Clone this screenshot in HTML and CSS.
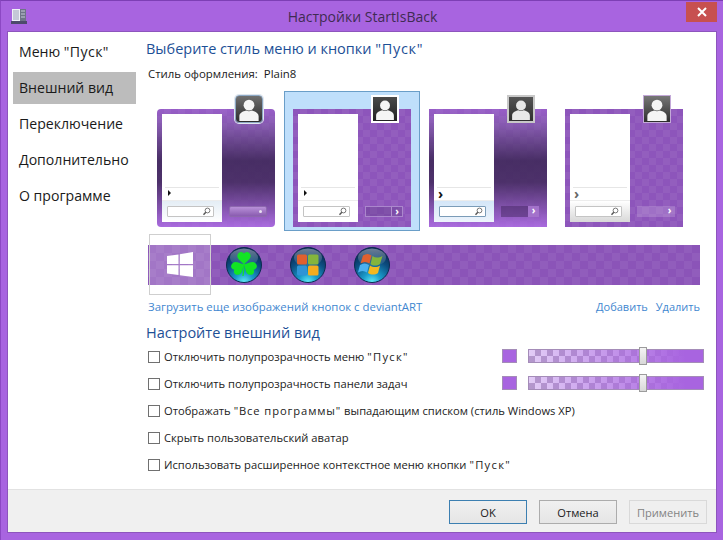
FILE: index.html
```html
<!DOCTYPE html>
<html lang="ru">
<head>
    <meta charset="UTF-8">
    <title>Настройки StartIsBack</title>
    <link rel="stylesheet" href="styles.css">
</head>
<body>

    <svg class="defs" width="0" height="0">
        <defs>
            <symbol id="person" viewBox="0 0 27 27">
                <circle cx="13.5" cy="9.5" r="5.6" fill="currentColor"/>
                <path d="M3.5 26V21c0-3.5 3.5-5 7-6 2 1 4 1 6 0 3.500 1 7 2.500 7 6v5z" fill="currentColor"/>
            </symbol>
            <symbol id="lens" viewBox="0 0 9 9">
                <circle cx="5.500" cy="3.500" r="2.400" fill="none" stroke="#777" stroke-width="1"/>
                <path d="M3.800 5.200L1.500 7.800" stroke="#555" stroke-width="1.400"/>
            </symbol>
            <radialGradient id="orbBody" cx="50%" cy="100%" r="90%">
                <stop offset="0" stop-color="#62eef8"/>
                <stop offset="0.3" stop-color="#1a9ccc"/>
                <stop offset="0.7" stop-color="#0c4d80"/>
                <stop offset="1" stop-color="#0a2c55"/>
            </radialGradient>
            <linearGradient id="orbGloss" x1="0" y1="0" x2="0" y2="1">
                <stop offset="0" stop-color="#fff" stop-opacity="0.4"/>
                <stop offset="1" stop-color="#fff" stop-opacity="0.03"/>
            </linearGradient>
        </defs>
    </svg>

    <header class="titlebar">
        <svg class="app-icon" width="17" height="17" viewBox="0 0 17 17">
            <rect x="0" y="13" width="16" height="3" fill="#4d4a6b"/>
            <rect x="1" y="1" width="8" height="12" fill="#eef0f6"/>
            <rect x="9" y="1" width="6" height="12" fill="#6e7488"/>
            <path d="M2 3h6M2 5h6M2 7h6M2 9h6M2 11h6" stroke="#9aa0b8" stroke-width="1"/>
            <path d="M10 3h4M10 6h4M10 9h4" stroke="#c4c9d8" stroke-width="1"/>
        </svg>
        <div class="title">Настройки StartIsBack</div>
        <button class="close-btn">
            <svg width="10" height="10" viewBox="0 0 10 10">
                <path d="M1 1l8 8M9 1l-8 8" stroke="#fff" stroke-width="2"/>
            </svg>
        </button>
    </header>

    <div class="client">
        <div class="main">
            <nav class="sidebar">
                <div class="nav-item">Меню <span class="quoted">"Пуск"</span></div>
                <div class="nav-item active">Внешний вид</div>
                <div class="nav-item">Переключение</div>
                <div class="nav-item">Дополнительно</div>
                <div class="nav-item">О программе</div>
            </nav>

            <section class="content">
                <h2 class="heading">Выберите стиль меню и кнопки <span class="quoted">"Пуск"</span></h2>
                <div class="style-name"><span>Стиль оформления:</span><span>Plain8</span></div>

                <div class="thumbs">
                    <div class="thumb">
                        <div class="preview glass rounded">
                            <div class="avatar avatar-glass"><svg class="person"><use href="#person"/></svg></div>
                            <div class="menu">
                                <div class="menu-list"><span class="arrow solid"></span></div>
                                <div class="menu-search tint-blue"><div class="search"><svg width="9" height="9"><use href="#lens"/></svg></div></div>
                            </div>
                            <div class="side"><div class="power power-glass"><i></i></div></div>
                        </div>
                    </div>
                    <div class="thumb selected">
                        <div class="preview flat">
                            <div class="avatar avatar-white"><svg class="person"><use href="#person"/></svg></div>
                            <div class="menu">
                                <div class="menu-list"><span class="arrow solid"></span></div>
                                <div class="menu-search"><div class="search"><svg width="9" height="9"><use href="#lens"/></svg></div></div>
                            </div>
                            <div class="side"><div class="power power-outline"><span class="seg">&rsaquo;</span></div></div>
                        </div>
                    </div>
                    <div class="thumb">
                        <div class="preview glass">
                            <div class="avatar avatar-gray"><svg class="person"><use href="#person"/></svg></div>
                            <div class="menu">
                                <div class="menu-list"><span class="chevron">&rsaquo;</span></div>
                                <div class="menu-search tint-strong"><div class="search search-blue"><svg width="9" height="9"><use href="#lens"/></svg></div></div>
                            </div>
                            <div class="side"><div class="power power-dark"><span class="seg seg-light">&rsaquo;</span></div></div>
                        </div>
                    </div>
                    <div class="thumb">
                        <div class="preview flat">
                            <div class="avatar avatar-soft"><svg class="person"><use href="#person"/></svg></div>
                            <div class="menu">
                                <div class="menu-list"><span class="chevron light">&rsaquo;</span></div>
                                <div class="menu-search tint-gray"><div class="search"><svg width="9" height="9"><use href="#lens"/></svg></div></div>
                            </div>
                            <div class="side"><div class="power power-light"><span class="seg seg-plain">&rsaquo;</span></div></div>
                        </div>
                    </div>
                </div>

                <div class="orbs">
                    <div class="orb-hover"></div>
                    <div class="orb-cell first">
                        <svg width="26" height="26" viewBox="0 0 26 26">
                            <path d="M0 4L11.500 2.400V12H0zM12.800 2.200L26 0V12H12.800zM0 13.300H11.500V23L0 21.500zM12.800 13.300H26V25L12.800 23.200z" fill="#fff"/>
                        </svg>
                    </div>
                    <div class="orb-cell">
                        <svg width="36" height="36" viewBox="0 0 36 36">
                            <circle cx="18" cy="18" r="17.500" fill="url(#orbBody)" stroke="#0c2c50"/>
                            <ellipse cx="18" cy="10.500" rx="14" ry="9" fill="url(#orbGloss)"/>
                            <g fill="#12e424">
                                <path d="M18 17.500C15 14 10.500 12 11.500 8 12.500 4.500 16 4 18 6.500 20 4 23.500 4.500 24.500 8 25.500 12 21 14 18 17.500z"/>
                                <path transform="rotate(-118 18 17.500)" d="M18 17.500C15 14 10.500 12 11.500 8 12.500 4.500 16 4 18 6.500 20 4 23.500 4.500 24.500 8 25.500 12 21 14 18 17.500z"/>
                                <path transform="rotate(118 18 17.500)" d="M18 17.500C15 14 10.500 12 11.500 8 12.500 4.500 16 4 18 6.500 20 4 23.500 4.500 24.500 8 25.500 12 21 14 18 17.500z"/>
                            </g>
                            <path d="M18 17c0 4-.3 7-1 12" stroke="#12e424" stroke-width="1.300" fill="none"/>
                        </svg>
                    </div>
                    <div class="orb-cell">
                        <svg width="36" height="36" viewBox="0 0 36 36">
                            <circle cx="18" cy="18" r="17.500" fill="url(#orbBody)" stroke="#0c2c50"/>
                            <ellipse cx="18" cy="10.500" rx="14" ry="9" fill="url(#orbGloss)"/>
                            <rect x="7" y="7.500" width="10" height="10" rx="1.500" fill="#e0602e"/>
                            <rect x="18" y="7.500" width="10.500" height="10" rx="1.500" fill="#84b53c"/>
                            <rect x="7" y="18.500" width="10" height="10" rx="1.500" fill="#2f94d6"/>
                            <rect x="18" y="18.500" width="10.500" height="10" rx="1.500" fill="#f4ac1e"/>
                        </svg>
                    </div>
                    <div class="orb-cell">
                        <svg width="36" height="36" viewBox="0 0 36 36">
                            <circle cx="18" cy="18" r="17.500" fill="url(#orbBody)" stroke="#0c2c50"/>
                            <ellipse cx="18" cy="10.500" rx="14" ry="9" fill="url(#orbGloss)"/>
                            <path d="M9 8.500c3-2 6-2 8.500 0l-2 8c-3-2-6-2-9 0z" fill="#e0602e"/>
                            <path d="M18.500 9c3 2 6 2 10 0l-2.500 8c-3 2-7 2-9.500 0z" fill="#84b53c"/>
                            <path d="M6 18c3-2 6-2 9 0l-2 7.500c-3-2-6-2-9 0z" fill="#4ab0f0"/>
                            <path d="M16 18.500c3 2 7 2 10 0l-2 7.500c-3 2-7 2-10 0z" fill="#f4b820"/>
                        </svg>
                    </div>
                </div>

                <div class="links">
                    <a class="link">Загрузить еще изображений кнопок с deviantART</a>
                    <div class="links-right">
                        <a class="link">Добавить</a>
                        <a class="link">Удалить</a>
                    </div>
                </div>

                <h2 class="heading heading-second">Настройте внешний вид</h2>

                <div class="options">
                    <div class="option">
                        <span class="check"></span><span class="label">Отключить полупрозрачность меню <span class="quoted">"Пуск"</span></span>
                        <div class="opacity">
                            <span class="swatch"></span>
                            <div class="slider"><span class="slider-thumb"></span></div>
                        </div>
                    </div>
                    <div class="option">
                        <span class="check"></span><span class="label">Отключить полупрозрачность панели задач</span>
                        <div class="opacity">
                            <span class="swatch"></span>
                            <div class="slider"><span class="slider-thumb"></span></div>
                        </div>
                    </div>
                    <div class="option">
                        <span class="check"></span><span class="label">Отображать <span class="quoted long">"Все программы"</span> выпадающим списком (стиль Windows XP)</span>
                    </div>
                    <div class="option">
                        <span class="check"></span><span class="label">Скрыть пользовательский аватар</span>
                    </div>
                    <div class="option">
                        <span class="check"></span><span class="label">Использовать расширенное контекстное меню кнопки <span class="quoted">"Пуск"</span></span>
                    </div>
                </div>
            </section>
        </div>

        <footer class="footer">
            <button class="btn btn-default">OK</button>
            <button class="btn">Отмена</button>
            <button class="btn btn-disabled">Применить</button>
        </footer>
    </div>

</body>
</html>
```

FILE: styles.css
```css
/* General styling */
html, body {
    height: 100%;
}

body {
    margin: 0;
    width: 723px;
    height: 540px;
    box-sizing: border-box;
    overflow: hidden;
    display: flex;
    flex-direction: column;
    padding: 0 7px 8px 7px;
    background: #a864e0;
    border-top: 1px solid #7d3fb5;
    border-left: 1px solid #8c48c4;
    font-family: "Open Sans", "Noto Sans", sans-serif;
    color: #1a1a1a;
}

.defs {
    position: absolute;
}

/* Title bar */
.titlebar {
    height: 31px;
    flex: none;
    display: flex;
    align-items: flex-start;
}

.app-icon {
    margin: 7px 0 0 3px;
}

.title {
    flex: 1;
    margin-top: 6px;
    padding-left: 11px;
    text-align: center;
    font-size: 14px;
    line-height: 20px;
    color: #3f2b52;
}

.close-btn {
    width: 31px;
    height: 20px;
    margin: 1px -1px 0 0;
    padding: 0;
    border: none;
    background: #c75050;
    display: flex;
    align-items: center;
    justify-content: center;
}

/* Client area */
.client {
    flex: 1;
    display: flex;
    flex-direction: column;
    background: #fff;
    outline: 1px solid #8d55bd;
}

.main {
    flex: 1;
    display: flex;
}

.sidebar {
    width: 128px;
    padding: 4px 0 0 5px;
    box-sizing: border-box;
    flex: none;
}

.nav-item {
    width: 123px;
    height: 32px;
    margin-bottom: 4px;
    padding-left: 6px;
    box-sizing: border-box;
    font-size: 14.100px;
    line-height: 32px;
    color: #1a1a1a;
}

.nav-item .quoted {
    letter-spacing: 0.4px;
}

.nav-item.active {
    background: #bcbcbc;
}

.content {
    flex: 1;
    padding: 7px 0 0 10px;
    min-width: 0;
}

.heading {
    margin: 0;
    font-size: 14.500px;
    font-weight: 400;
    line-height: 20px;
    color: #1d4f96;
}

.heading .quoted {
    letter-spacing: 0.7px;
}

.style-name {
    display: flex;
    gap: 6px;
    margin: 7px 0 0 2px;
    font-size: 11.400px;
    line-height: 16px;
    color: #1a1a1a;
}

/* Style thumbnails */
.thumbs {
    display: flex;
    margin: 9px 0 0 2px;
}

.thumb {
    width: 136px;
    height: 140px;
    box-sizing: border-box;
    padding: 18px 9px 4px;
}

.thumb.selected {
    background: #bfdffb;
    border: 1px solid #6a9ec8;
    padding: 17px 8px 3px;
}

.preview {
    width: 118px;
    height: 118px;
    box-sizing: border-box;
    padding: 5px;
    position: relative;
    display: flex;
    background-color: #8d55bb;
    background-image: repeating-conic-gradient(rgba(255, 255, 255, 0.05) 0 25%, transparent 0 50%);
    background-size: 14px 14px;
}

.preview.glass {
    background-color: #9a62c8;
    background-image:
        linear-gradient(180deg, rgba(150, 90, 200, 0.6) 0, rgba(125, 85, 165, 0.75) 14%, rgba(66, 42, 94, 0.94) 44%, rgba(70, 44, 98, 0.92) 62%, rgba(172, 108, 226, 0.85) 100%),
        repeating-conic-gradient(rgba(255, 255, 255, 0.1) 0 25%, transparent 0 50%);
    background-size: auto, 14px 14px;
}

.preview.rounded {
    border-radius: 4px;
}

.avatar {
    position: absolute;
    right: 12px;
    top: -14px;
    width: 28px;
    height: 28px;
    box-sizing: border-box;
    background: linear-gradient(180deg, #707070, #2c2c2c);
    color: #f5f5f5;
}

.person {
    display: block;
    width: 100%;
    height: 100%;
}

.avatar-glass {
    border: 1px solid #8da8c4;
    border-radius: 4px;
    box-shadow: 0 0 0 1px #dfe6ee;
}

.avatar-white {
    background: linear-gradient(180deg, #4a4a4a, #222);
    border: 2px solid #fff;
}

.avatar-gray {
    background: linear-gradient(180deg, #555, #2e2e2e);
    border: 2px solid #c8c8c8;
    color: #e8e8e8;
}

.avatar-soft {
    background: linear-gradient(180deg, #777, #2e2e2e);
    border: 1px solid #c3a9d8;
}

.menu {
    width: 60px;
    height: 108px;
    flex: none;
    display: flex;
    flex-direction: column;
    background: #fff;
}

.menu-list {
    height: 86px;
    flex: none;
    box-sizing: border-box;
    margin: 0 3px;
    padding-top: 74px;
    position: relative;
}

.menu-list::after {
    content: "";
    position: absolute;
    left: 0;
    right: 0;
    top: 73px;
    border-top: 1px solid #e6e6e6;
}

.arrow.solid {
    display: block;
    margin: 2px 0 0 3px;
    width: 0;
    height: 0;
    border-left: 3px solid #111;
    border-top: 3px solid transparent;
    border-bottom: 3px solid transparent;
}

.chevron {
    display: block;
    margin-left: 1px;
    font-size: 14px;
    font-weight: 700;
    line-height: 12px;
    color: #111;
}

.chevron.light {
    color: #666;
}

.menu-search {
    flex: 1;
    padding: 5px 0 0 5px;
    border-top: 1px solid #ececec;
}

.tint-blue {
    background: linear-gradient(180deg, #e4edf5, #fff);
}

.tint-strong {
    background: linear-gradient(180deg, #d4e6f8, #edf4fc);
}

.tint-gray {
    background: linear-gradient(180deg, #fff, #d8d8d8);
}

.search {
    width: 47px;
    height: 11px;
    box-sizing: border-box;
    background: #fff;
    border: 1px solid #c4c4c4;
    border-radius: 1px;
    display: flex;
    justify-content: flex-end;
    padding-right: 2px;
}

.search-blue {
    border-color: #7b9cb8;
}

.search svg {
    flex: none;
}

.side {
    flex: 1;
    display: flex;
    align-items: flex-end;
    justify-content: flex-end;
    padding: 0 3px 5px 0;
}

.power {
    width: 38px;
    height: 11px;
    box-sizing: border-box;
    display: flex;
    justify-content: flex-end;
    align-items: center;
}

.power i {
    width: 3px;
    height: 3px;
    margin-right: 4px;
    background: #e8e0f0;
    border-radius: 50%;
}

.seg {
    width: 11px;
    height: 100%;
    flex: none;
    box-sizing: border-box;
    border-left: 1px solid rgba(210, 190, 230, 0.6);
    color: #fff;
    font-size: 10px;
    font-weight: 700;
    line-height: 9px;
    text-align: center;
}

.seg-light {
    background: rgba(170, 120, 210, 0.9);
    border-left: none;
}

.seg-plain {
    border-left: none;
}

.power-glass {
    background: linear-gradient(180deg, #b890d8, #8a5cb0);
    border: 1px solid #8d68ae;
    border-radius: 2px;
}

.power-outline {
    border: 1px solid rgba(190, 160, 220, 0.7);
    background: rgba(90, 55, 125, 0.3);
}

.power-dark {
    background: rgba(70, 40, 100, 0.5);
}

.power-light {
    background: rgba(255, 255, 255, 0.16);
}

/* Start button orbs */
.orbs {
    height: 40px;
    width: 552px;
    margin: 14px 0 0 2px;
    display: flex;
    align-items: center;
    position: relative;
    background-color: #8b54b8;
    background-image: repeating-conic-gradient(rgba(255, 255, 255, 0.05) 0 25%, transparent 0 50%);
    background-size: 16px 16px;
}

.orb-hover {
    position: absolute;
    left: 1px;
    top: -11px;
    width: 62px;
    height: 61px;
    box-sizing: border-box;
    border: 1px solid #cfcfcf;
    background: rgba(255, 255, 255, 0.2);
}

.orb-cell {
    width: 36px;
    height: 36px;
    margin-left: 28px;
    line-height: 0;
    position: relative;
}

.orb-cell.first {
    margin-left: 19px;
    display: flex;
    align-items: center;
    width: 45px;
}

.orb-cell.first + .orb-cell {
    margin-left: 14px;
}

/* Links */
.links {
    display: flex;
    justify-content: space-between;
    width: 552px;
    margin: 14px 0 0 2px;
    font-size: 11.400px;
    line-height: 16px;
}

.links-right {
    display: flex;
    gap: 8px;
    font-size: 11px;
}

.link {
    color: #3f87d0;
}

.heading-second {
    margin-top: 8px;
}

/* Options */
.options {
    margin: 0 0 0 2px;
}

.option {
    height: 27px;
    width: 556px;
    display: flex;
    align-items: center;
    font-size: 11.200px;
    color: #222;
}

.option .quoted {
    letter-spacing: 1.300px;
}

.option .quoted.long {
    letter-spacing: 0.900px;
}

.check {
    width: 12px;
    height: 12px;
    box-sizing: border-box;
    border: 1px solid #707070;
    background: #fff;
    margin-right: 4px;
    flex: none;
}

.opacity {
    margin-left: auto;
    display: flex;
    align-items: center;
    gap: 11px;
    position: relative;
    top: -1px;
}

.swatch {
    width: 15px;
    height: 14px;
    box-sizing: border-box;
    background: #a864e0;
    border: 1px solid #a48cb8;
}

.slider {
    width: 176px;
    height: 14px;
    box-sizing: border-box;
    border: 1px solid #a48cb8;
    position: relative;
    background-image:
        linear-gradient(90deg, rgba(168, 100, 224, 0) 0, #a864e0 90%),
        repeating-conic-gradient(#b498cc 0 25%, #e2ccf6 0 50%);
    background-size: auto, 12px 12px;
}

.slider-thumb {
    position: absolute;
    left: 110px;
    top: -3px;
    width: 8px;
    height: 18px;
    box-sizing: border-box;
    background: linear-gradient(180deg, #f4f4f4, #d8d8d8);
    border: 1px solid #9c9c9c;
}

/* Footer */
.footer {
    height: 43px;
    flex: none;
    display: flex;
    justify-content: flex-end;
    gap: 12px;
    padding: 10px 9px 0 0;
    box-sizing: border-box;
    background: #f0f0f0;
    border-top: 1px solid #e2e2e2;
}

.btn {
    width: 78px;
    height: 24px;
    padding: 0;
    border: 1px solid #acacac;
    background: linear-gradient(180deg, #f0f0f0, #e5e5e5);
    font-family: inherit;
    font-size: 11.100px;
    color: #1a1a1a;
}

.btn-default {
    border: 1px solid #3c7fb1;
}

.btn-disabled {
    border-color: #d9d9d9;
    background: #efefef;
    color: #838383;
}
```
